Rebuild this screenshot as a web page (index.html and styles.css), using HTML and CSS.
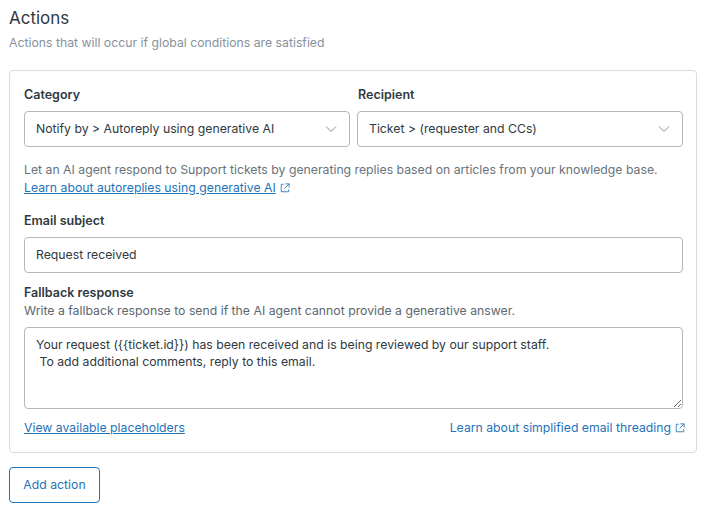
FILE: index.html
```html
<!DOCTYPE html>
<html lang="en">
<head>
<meta charset="utf-8">
<title>Actions</title>
<link rel="stylesheet" href="styles.css">
</head>
<body>
<main class="page">
  <h1 class="title">Actions</h1>
  <p class="subtitle">Actions that will occur if global conditions are satisfied</p>
  <section class="card">
    <div class="selects">
      <div class="field">
        <div class="label">Category</div>
        <div class="select"><span>Notify by &gt; Autoreply using generative AI</span>
          <svg class="chevron" viewBox="0 0 12 12"><path d="M1 3.5 6 8.5 11 3.5" fill="none" stroke="currentColor" stroke-width="1"/></svg>
        </div>
      </div>
      <div class="field">
        <div class="label label-shift">Recipient</div>
        <div class="select"><span>Ticket &gt; (requester and CCs)</span>
          <svg class="chevron" viewBox="0 0 12 12"><path d="M1 3.5 6 8.5 11 3.5" fill="none" stroke="currentColor" stroke-width="1"/></svg>
        </div>
      </div>
    </div>
    <p class="hint">Let an AI agent respond to Support tickets by generating replies based on articles from your knowledge base.<br>
      <a class="link" href="#">Learn about autoreplies using generative AI</a><svg class="ext" viewBox="0 0 12 12"><path d="M4.5 1.5H1.5V10.5H10.5V7.5M6.5 1H11V5.5M11 1 5.5 6.5" fill="none" stroke="currentColor" stroke-width="1"/></svg>
    </p>
    <div class="label subject-label">Email subject</div>
    <input class="input" type="text" value="Request received">
    <div class="label fallback-label">Fallback response</div>
    <p class="fallback-hint">Write a fallback response to send if the AI agent cannot provide a generative answer.</p>
    <textarea class="textarea">Your request ({{ticket.id}}) has been received and is being reviewed by our support staff.
 To add additional comments, reply to this email.</textarea>
    <div class="links">
      <a class="link" href="#">View available placeholders</a>
      <span class="link-end"><a class="link plain" href="#">Learn about simplified email threading</a><svg class="ext" viewBox="0 0 12 12"><path d="M4.5 1.5H1.5V10.5H10.5V7.5M6.5 1H11V5.5M11 1 5.5 6.5" fill="none" stroke="currentColor" stroke-width="1"/></svg></span>
    </div>
  </section>
  <button class="add" type="button">Add action</button>
</main>
</body>
</html>
```
FILE: styles.css
```css
* { box-sizing: border-box; }
html, body { margin: 0; background: #fff; }
body { font-family: Inter, "Liberation Sans", sans-serif; font-size: 12.25px; line-height: 18px; color: #2f3941; }
.page { padding: 7px 12px 0 9px; }
.title { margin: 0; font-size: 17px; line-height: 22px; font-weight: 400; color: #2f3941; }
.subtitle { margin: 6px 0 0; font-size: 12.25px; line-height: 16px; color: #87929d; }
.card { margin-top: 19px; height: 383px; border: 1px solid #d8dcde; border-radius: 4px; padding: 15px 13px 0 14px; }
.selects { display: grid; grid-template-columns: 326px 326px; column-gap: 7px; }
.label { font-size: 12.5px; line-height: 18px; font-weight: 600; color: #2f3941; }
.label-shift { padding-left: 1px; }
.select { margin-top: 7px; height: 36px; display: flex; align-items: center; justify-content: space-between; padding: 0 12px 0 11px; border: 1px solid #b0b8be; border-radius: 4px; }
.chevron { width: 12px; height: 12px; color: #87929d; }
.hint { margin: 14px 0 0; font-size: 12.25px; line-height: 18px; color: #68737d; }
.link { color: #1f73b7; text-decoration: underline; }
.plain { text-decoration: none; }
.ext { width: 10px; height: 10px; color: #1f73b7; vertical-align: -1px; margin-left: 4px; }
.subject-label { margin-top: 15px; }
.input { display: block; margin-top: 7px; width: 659px; height: 36px; padding: 0 11px 2px; border: 1px solid #b0b8be; border-radius: 4px; font: inherit; color: #2f3941; }
.fallback-label { margin-top: 11px; }
.fallback-hint { margin: 0; font-size: 12.25px; line-height: 18px; color: #5c6770; }
.textarea { display: block; margin-top: 7px; width: 659px; height: 82px; padding: 8px 11px; border: 1px solid #b0b8be; border-radius: 4px; font: inherit; font-size: 12.25px; line-height: 17px; color: #2f3941; resize: vertical; }
.links { margin-top: 10px; display: flex; justify-content: space-between; font-size: 12.25px; line-height: 18px; }
.link-end { margin-right: -2px; }
.add { display: block; margin-top: 14px; width: 91px; height: 36px; padding: 0; background: #fff; border: 1px solid #1f73b7; border-radius: 4px; font: inherit; font-size: 12.25px; color: #1f73b7; }
```
